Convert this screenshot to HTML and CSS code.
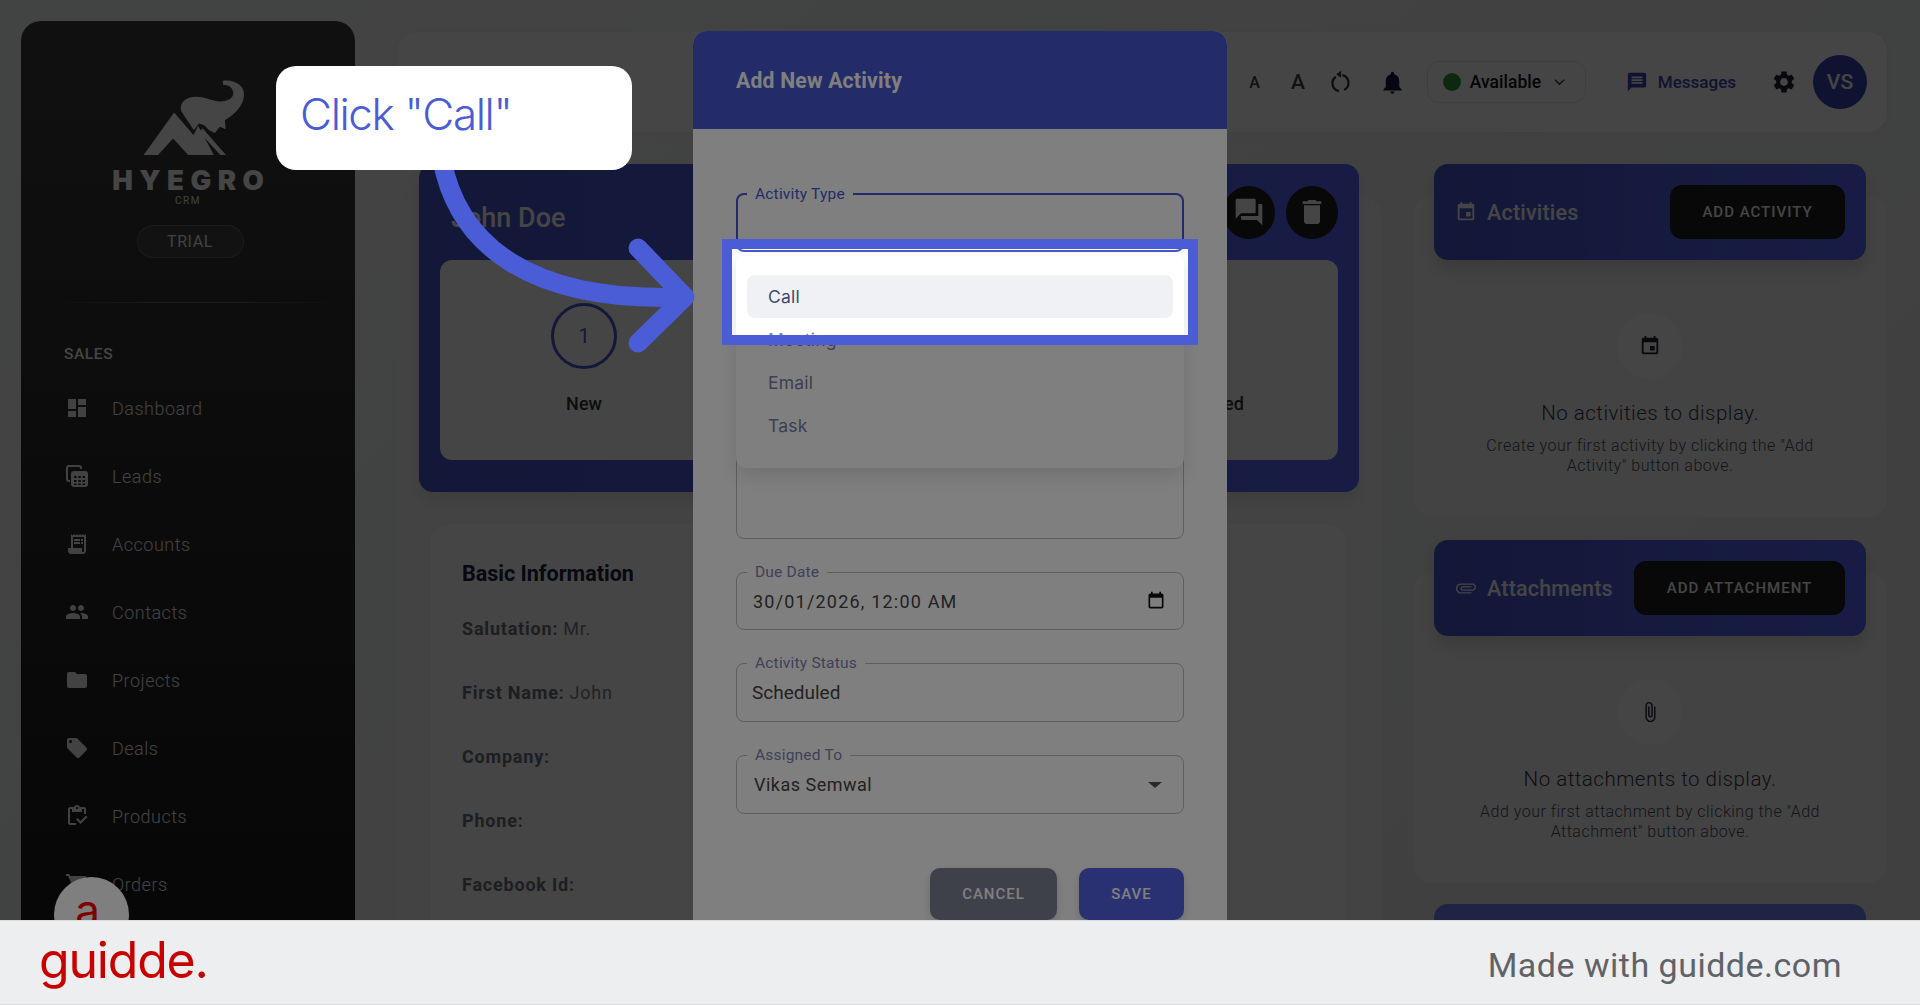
FILE: index.html
```html
<!DOCTYPE html>
<html lang="en">
<head>
<meta charset="utf-8">
<title>Add New Activity</title>
<link rel="stylesheet" href="styles.css">
</head>
<body>
<svg class="defs" width="0" height="0" aria-hidden="true">
  <symbol id="i-dashboard" viewBox="0 0 24 24"><path d="M3 13h8V3H3v10zm0 8h8v-6H3v6zm10 0h8V11h-8v10zm0-18v6h8V3h-8z"/></symbol>
  <symbol id="i-leads" viewBox="0 0 24 24"><path d="M4 1h10a3 3 0 0 1 3 3v1h-2V4a1 1 0 0 0-1-1H4a1 1 0 0 0-1 1v11a1 1 0 0 0 1 1h1v2H4a3 3 0 0 1-3-3V4a3 3 0 0 1 3-3z"/><path fill-rule="evenodd" d="M9 7h11a3 3 0 0 1 3 3v10a3 3 0 0 1-3 3H9a3 3 0 0 1-3-3V10a3 3 0 0 1 3-3zm0 5v2h2.500v-2H9zm4.300 0v2h2.500v-2h-2.500zm4.300 0v2h2.400v-2h-2.400zM9 16v2h2.500v-2H9zm4.300 0v2h2.500v-2h-2.500zm4.300 0v2h2.400v-2h-2.400zM9 19.500v1.500h2.500v-1.500H9zm4.300 0v1.500h2.500v-1.500h-2.500zm4.300 0v1.500h2.400v-1.500h-2.400z"/></symbol>
  <symbol id="i-receipt" viewBox="0 0 24 24"><path d="M19.500 3.500 18 2l-1.500 1.500L15 2l-1.500 1.500L12 2l-1.500 1.500L9 2 7.500 3.500 6 2v14H3v3c0 1.660 1.340 3 3 3h12c1.660 0 3-1.340 3-3V2l-1.500 1.500zM19 19c0 .55-.45 1-1 1s-1-.45-1-1v-3H8V5h11v14z"/><path d="M9 7h6v2H9zM16 7h2v2h-2zM9 10h6v2H9zM16 10h2v2h-2z"/></symbol>
  <symbol id="i-people" viewBox="0 0 24 24"><path d="M16 11c1.660 0 2.990-1.340 2.990-3S17.660 5 16 5c-1.660 0-3 1.340-3 3s1.340 3 3 3zm-8 0c1.660 0 2.990-1.340 2.990-3S9.660 5 8 5C6.340 5 5 6.340 5 8s1.340 3 3 3zm0 2c-2.330 0-7 1.170-7 3.500V19h14v-2.500c0-2.330-4.670-3.500-7-3.500zm8 0c-.29 0-.62.02-.97.05 1.160.84 1.970 1.970 1.970 3.450V19h6v-2.500c0-2.330-4.670-3.500-7-3.500z"/></symbol>
  <symbol id="i-folder" viewBox="0 0 24 24"><path d="M10 4H4c-1.100 0-1.990.9-1.990 2L2 18c0 1.100.9 2 2 2h16c1.100 0 2-.9 2-2V8c0-1.100-.9-2-2-2h-8l-2-2z"/></symbol>
  <symbol id="i-tag" viewBox="0 0 24 24"><path d="M21.410 11.580l-9-9C12.050 2.220 11.550 2 11 2H4c-1.100 0-2 .9-2 2v7c0 .55.22 1.050.59 1.420l9 9c.36.36.86.58 1.410.58.55 0 1.050-.22 1.410-.59l7-7c.37-.36.59-.86.59-1.410 0-.55-.23-1.060-.59-1.420zM5.500 7C4.670 7 4 6.330 4 5.500S4.670 4 5.500 4 7 4.670 7 5.500 6.330 7 5.500 7z"/></symbol>
  <symbol id="i-inventory" viewBox="0 0 24 24"><path d="M5 5h2v3h10V5h2v5h2V5c0-1.100-.9-2-2-2h-4.180C14.400 1.840 13.300 1 12 1s-2.400.84-2.820 2H5c-1.100 0-2 .9-2 2v14c0 1.100.9 2 2 2h6v-2H5V5zm7-2c.55 0 1 .45 1 1s-.45 1-1 1-1-.45-1-1 .45-1 1-1z"/><path d="M21 11.500 15.500 17l-3-3-1.500 1.500 4.500 4.500 7-7z"/></symbol>
  <symbol id="i-cart" viewBox="0 0 24 24"><path d="M7 18c-1.100 0-1.990.9-1.990 2S5.900 22 7 22s2-.9 2-2-.9-2-2-2zM1 2v2h2l3.600 7.590-1.350 2.450c-.16.28-.25.61-.25.96 0 1.100.9 2 2 2h12v-2H7.420c-.14 0-.25-.11-.25-.25l.03-.12.9-1.630h7.450c.75 0 1.410-.41 1.750-1.030l3.580-6.490c.08-.14.12-.31.12-.48 0-.55-.45-1-1-1H5.210l-.94-2H1zm16 16c-1.100 0-1.990.9-1.990 2s.89 2 1.990 2 2-.9 2-2-.9-2-2-2z"/></symbol>
  <symbol id="i-bell" viewBox="0 0 24 24"><path d="M12 22c1.100 0 2-.9 2-2h-4c0 1.100.89 2 2 2zm6-6v-5c0-3.070-1.640-5.640-4.500-6.320V4c0-.83-.67-1.500-1.500-1.500s-1.500.67-1.500 1.500v.68C7.630 5.360 6 7.920 6 11v5l-2 2v1h16v-1l-2-2z"/></symbol>
  <symbol id="i-reset" viewBox="0 0 24 24"><path d="M13 1.500v6.500l-4.500-3.200zM14.500 4.700a8.400 8.400 0 0 1 1.800 15.600l-1-1.800a6.300 6.300 0 0 0-1.400-11.800zM7.500 6.300l1.300 1.700a6.300 6.300 0 0 0 2.400 11.300l-.3 2.100A8.400 8.400 0 0 1 7.500 6.300z"/></symbol>
  <symbol id="i-message" viewBox="0 0 24 24"><path d="M20 2H4c-1.100 0-1.990.9-1.990 2L2 22l4-4h14c1.100 0 2-.9 2-2V4c0-1.100-.9-2-2-2zm-2 12H6v-2h12v2zm0-3H6V9h12v2zm0-3H6V6h12v2z"/></symbol>
  <symbol id="i-gear" viewBox="0 0 24 24"><path d="M19.140 12.940c.04-.3.06-.61.06-.94 0-.32-.02-.64-.07-.94l2.030-1.580c.18-.14.23-.41.12-.61l-1.920-3.320c-.12-.22-.37-.29-.59-.22l-2.390.96c-.5-.38-1.030-.7-1.620-.94l-.36-2.540c-.04-.24-.24-.41-.48-.41h-3.840c-.24 0-.43.17-.47.41l-.36 2.540c-.59.24-1.130.57-1.620.94l-2.390-.96c-.22-.08-.47 0-.59.22L2.740 8.870c-.12.21-.08.47.12.61l2.030 1.580c-.05.3-.09.63-.09.94s.02.64.07.94l-2.030 1.580c-.18.14-.23.41-.12.61l1.920 3.320c.12.22.37.29.59.22l2.390-.96c.5.38 1.030.7 1.620.94l.36 2.540c.05.24.24.41.48.41h3.840c.24 0 .44-.17.47-.41l.36-2.540c.59-.24 1.130-.56 1.620-.94l2.390.96c.22.08.47 0 .59-.22l1.920-3.320c.12-.22.07-.47-.12-.61l-2.010-1.580zM12 15.600c-1.980 0-3.600-1.620-3.600-3.600s1.620-3.600 3.600-3.600 3.600 1.620 3.600 3.600-1.620 3.600-3.600 3.600z"/></symbol>
  <symbol id="i-forum" viewBox="0 0 24 24"><path d="M21 6h-2v9H6v2c0 .55.45 1 1 1h11l4 4V7c0-.55-.45-1-1-1zm-4 6V3c0-.55-.45-1-1-1H3c-.55 0-1 .45-1 1v14l4-4h10c.55 0 1-.45 1-1z"/></symbol>
  <symbol id="i-delete" viewBox="0 0 24 24"><path d="M6 19c0 1.100.9 2 2 2h8c1.100 0 2-.9 2-2V7H6v12zM19 4h-3.500l-1-1h-5l-1 1H5v2h14V4z"/></symbol>
  <symbol id="i-event" viewBox="0 0 24 24"><path d="M17 12h-5v5h5v-5zM16 1v2H8V1H6v2H5c-1.110 0-1.990.9-1.990 2L3 19c0 1.100.89 2 2 2h14c1.100 0 2-.9 2-2V5c0-1.100-.9-2-2-2h-1V1h-2zm3 18H5V8h14v11z"/></symbol>
  <symbol id="i-clip" viewBox="0 0 24 24"><path d="M16.500 6v11.500c0 2.210-1.790 4-4 4s-4-1.790-4-4V5c0-1.380 1.120-2.500 2.500-2.500s2.500 1.120 2.500 2.500v10.500c0 .55-.45 1-1 1s-1-.45-1-1V6H10v9.500c0 1.380 1.120 2.500 2.500 2.500s2.500-1.120 2.500-2.500V5c0-2.210-1.790-4-4-4S7 2.790 7 5v12.500c0 3.040 2.460 5.500 5.500 5.500s5.500-2.460 5.500-5.500V6h-1.500z"/></symbol>
  <symbol id="i-cal" viewBox="0 0 24 24"><path d="M19 3h-1V1h-2v2H8V1H6v2H5a2 2 0 0 0-2 2v14a2 2 0 0 0 2 2h14a2 2 0 0 0 2-2V5a2 2 0 0 0-2-2zm0 16H5V8h14v11z"/></symbol>
</svg>

<div class="stage">
  <div class="app">
    <aside class="sidebar">
      <div class="brand">
        <svg class="logo" viewBox="120 25 305 230" aria-hidden="true">
          <path d="M122 252 213 125 271 192 285 165 332 252H255L210 203 165 252z"/>
          <path d="M235 122C226 100 245 80 275 78 300 75 330 92 350 92 375 92 392 80 390 65 388 50 375 42 360 43L358 30C395 25 425 45 422 75 420 105 395 130 365 148L367 175 350 168 335 186 318 178 303 163 287 158 272 178z"/>
          <path d="M298 172 368 252H351L289 184z"/>
        </svg>
        <div class="wordmark">HYEGRO</div>
        <div class="crm">CRM</div>
        <div class="trial">TRIAL</div>
      </div>
      <div class="side-rule"></div>
      <div class="side-head">SALES</div>
      <nav class="nav">
        <a class="nav-item"><svg class="nav-icon"><use href="#i-dashboard"/></svg>Dashboard</a>
        <a class="nav-item"><svg class="nav-icon"><use href="#i-leads"/></svg>Leads</a>
        <a class="nav-item"><svg class="nav-icon"><use href="#i-receipt"/></svg>Accounts</a>
        <a class="nav-item"><svg class="nav-icon"><use href="#i-people"/></svg>Contacts</a>
        <a class="nav-item"><svg class="nav-icon"><use href="#i-folder"/></svg>Projects</a>
        <a class="nav-item"><svg class="nav-icon"><use href="#i-tag"/></svg>Deals</a>
        <a class="nav-item"><svg class="nav-icon"><use href="#i-inventory"/></svg>Products</a>
        <a class="nav-item"><svg class="nav-icon"><use href="#i-cart"/></svg>Orders</a>
      </nav>
    </aside>

    <main class="main">
      <header class="topbar">
        <span class="font-a small">A</span>
        <span class="font-a big">A</span>
        <svg class="top-icon reset"><use href="#i-reset"/></svg>
        <svg class="top-icon bell"><use href="#i-bell"/></svg>
        <div class="status"><span class="dot"></span><span class="status-text">Available</span><svg class="chev" viewBox="0 0 12 8"><path d="M1 1.500l5 5 5-5"/></svg></div>
        <div class="messages"><svg class="msg-icon"><use href="#i-message"/></svg>Messages</div>
        <svg class="top-icon gear"><use href="#i-gear"/></svg>
        <div class="avatar">VS</div>
      </header>

      <div class="columns">
        <section class="lead-card">
          <div class="lead-head">
            <div class="lead-title-row">
              <h1 class="lead-name">John Doe</h1>
              <div class="round-btns">
                <span class="round-btn"><svg><use href="#i-forum"/></svg></span>
                <span class="round-btn"><svg><use href="#i-delete"/></svg></span>
              </div>
            </div>
            <div class="stages">
              <div class="step"><span class="step-num">1</span><span class="step-label">New</span></div>
              <div class="step step-end"><span class="step-label">Closed</span></div>
            </div>
          </div>
          <div class="info-card">
            <h2 class="info-title">Basic Information</h2>
            <p class="info-row"><b>Salutation:</b> Mr.</p>
            <p class="info-row"><b>First Name:</b> John</p>
            <p class="info-row"><b>Company:</b></p>
            <p class="info-row"><b>Phone:</b></p>
            <p class="info-row"><b>Facebook Id:</b></p>
          </div>
        </section>

        <div class="col-right">
          <section class="panel">
            <div class="panel-head">
              <svg class="panel-icon"><use href="#i-event"/></svg>
              <span class="panel-title">Activities</span>
              <span class="panel-btn btn-activity">ADD ACTIVITY</span>
            </div>
            <div class="empty">
              <span class="empty-icon"><svg><use href="#i-event"/></svg></span>
              <p class="empty-title">No activities to display.</p>
              <p class="empty-sub">Create your first activity by clicking the "Add<br>Activity" button above.</p>
            </div>
          </section>
          <section class="panel">
            <div class="panel-head">
              <svg class="panel-icon clip-flat"><use href="#i-clip"/></svg>
              <span class="panel-title">Attachments</span>
              <span class="panel-btn btn-attach">ADD ATTACHMENT</span>
            </div>
            <div class="empty empty-tight">
              <span class="empty-icon"><svg><use href="#i-clip"/></svg></span>
              <p class="empty-title">No attachments to display.</p>
              <p class="empty-sub">Add your first attachment by clicking the "Add<br>Attachment" button above.</p>
            </div>
          </section>
          <section class="panel-next"></section>
        </div>
      </div>
    </main>
  </div>

  <div class="backdrop"></div>

  <div class="widget"><span>a.</span></div>

  <div class="modal">
    <div class="modal-head">Add New Activity</div>
    <div class="modal-body">
      <div class="field field-focus"><span class="field-label">Activity Type</span></div>
      <div class="field field-desc"></div>
      <div class="field field-date"><span class="field-label">Due Date</span><span class="field-value date">30/01/2026, 12:00 AM</span><svg class="field-icon"><use href="#i-cal"/></svg></div>
      <div class="field"><span class="field-label">Activity Status</span><span class="field-value status-value">Scheduled</span></div>
      <div class="field"><span class="field-label">Assigned To</span><span class="field-value assigned">Vikas Semwal</span><span class="caret"></span></div>
      <div class="modal-actions">
        <span class="act act-cancel">CANCEL</span>
        <span class="act act-save">SAVE</span>
      </div>
    </div>
    <ul class="menu">
      <li class="menu-item active">Call</li>
      <li class="menu-item">Meeting</li>
      <li class="menu-item">Email</li>
      <li class="menu-item">Task</li>
    </ul>
  </div>

  <div class="spot"></div>

  <svg class="arrow" viewBox="0 0 1920 920" aria-hidden="true">
    <path d="M442 160C458 245 530 303 684 297"/>
    <path d="M638 248 685 297 638 343"/>
  </svg>

  <div class="callout">Click "Call"</div>
</div>

<footer class="footer">
  <span class="guidde">guidde.</span>
  <span class="made">Made with guidde.com</span>
</footer>
</body>
</html>
```
FILE: styles.css
```css
* { box-sizing: border-box; }
html, body { margin: 0; height: 100%; }
body {
  width: 1920px;
  height: 1005px;
  overflow: hidden;
  display: flex;
  flex-direction: column;
  font-family: Roboto, "Liberation Sans", sans-serif;
  background: #f4f7f6;
}
.defs { position: absolute; }
svg { fill: currentColor; }

.stage { position: relative; height: 920px; overflow: hidden; flex: none; }
.app { display: flex; height: 1300px; padding: 21px 33px 0 21px; gap: 42px; background: linear-gradient(135deg, #f6faf8, #ebebeb); }

/* Sidebar */
.sidebar {
  width: 334px;
  flex: none;
  height: 1200px;
  border-radius: 20px 20px 0 0;
  background: linear-gradient(180deg, #3e3e3e 0, #1a1a1a 900px);
  color: #fff;
  display: flex;
  flex-direction: column;
}
.brand { display: flex; flex-direction: column; align-items: center; padding-top: 58px; }
.logo { width: 102px; height: 77px; margin-left: 12px; fill: #fff; flex: none; }
.wordmark { margin-top: 12px; font-family: Inter, Roboto, sans-serif; font-weight: 900; font-size: 27.500px; line-height: 24px; letter-spacing: 6.500px; margin-right: -6.500px; }
.crm { margin-top: 3px; font-size: 10px; line-height: 12px; letter-spacing: 1.500px; color: #eee; }
.trial {
  margin-top: 18px; width: 107px; height: 33px; margin-left: 4px;
  border-radius: 17px; border: 1px solid rgba(255,255,255,.18); background: rgba(255,255,255,.07);
  display: flex; align-items: center; justify-content: center;
  font-size: 16px; color: #f0f0f0; letter-spacing: .6px;
}
.side-rule { margin: 44px 12px 0 24px; height: 1px; flex: none; background: linear-gradient(90deg, transparent, rgba(255,255,255,.25) 40%, rgba(255,255,255,.2) 70%, transparent); }
.side-head { margin: 43px 0 0 43px; font-size: 15.500px; line-height: 16px; font-weight: 500; letter-spacing: .6px; color: #fff; }
.nav { display: flex; flex-direction: column; margin-top: 12px; }
.nav-item { height: 68px; flex: none; display: flex; align-items: center; padding-left: 44px; gap: 23px; font-size: 18px; font-weight: 300; letter-spacing: .5px; color: #f4f4f4; }
.nav-icon { width: 24px; height: 24px; flex: none; }

/* Main */
.main { flex: 1; display: flex; flex-direction: column; min-width: 0; }
.topbar {
  flex: none;
  margin-top: 11px; height: 100px; padding-right: 20px;
  background: #fff; border-radius: 20px;
  display: flex; align-items: center; justify-content: flex-end;
  box-shadow: 0 2px 10px rgba(0,0,0,.03);
}
.font-a { font-weight: 500; color: #3c4047; }
.font-a.small { font-size: 16px; margin-right: 31px; }
.font-a.big { font-size: 21px; margin-right: 22px; }
.top-icon { width: 24px; height: 24px; color: #262c3d; flex: none; }
.reset { width: 26px; height: 26px; margin-right: 26px; color: #2f3440; }
.bell { width: 27px; height: 27px; margin-right: 21px; color: #10183c; }
.status { width: 159px; height: 42px; border: 1px solid rgba(0,0,0,.1); border-radius: 12px; display: flex; align-items: center; padding-left: 15px; margin-right: 40px; }
.dot { width: 18px; height: 18px; border-radius: 50%; background: #2e9a32; flex: none; }
.status-text { margin-left: 9px; font-size: 17.500px; font-weight: 500; color: #111; }
.chev { width: 11px; height: 8px; margin-left: 13px; fill: none; stroke: #333; stroke-width: 1.500; }
.messages { display: flex; align-items: center; gap: 10px; font-size: 17px; font-weight: 500; color: #3949b6; margin-right: 35px; }
.msg-icon { width: 22px; height: 22px; }
.gear { width: 26px; height: 26px; margin-right: 16px; color: #1d2233; }
.avatar { width: 54px; height: 54px; border-radius: 50%; background: #3949b6; color: #fff; display: flex; align-items: center; justify-content: center; font-size: 21px; font-weight: 500; }

.columns { flex: none; display: grid; grid-template-columns: 984px 474px; gap: 32px; align-items: start; margin-top: 64px; }
.lead-card { background: #f8f8f8; border-radius: 20px 20px 0 0; height: 1000px; }
.lead-head {
  margin: -32px 22px 0; height: 328px; border-radius: 14px;
  background: linear-gradient(90deg, #4658d0, #5a6aff); padding: 0 21px 32px; display: flex; flex-direction: column;
  box-shadow: 0 8px 16px rgba(0,0,0,.08);
}
.lead-title-row { flex: none; height: 96px; display: flex; align-items: center; justify-content: space-between; padding-left: 11px; }
.lead-name { margin: 12px 0 0; font-size: 27px; font-weight: 500; color: #fff; }
.round-btns { display: flex; gap: 11px; }
.round-btn { width: 52px; height: 53px; border-radius: 50%; background: #1e1e1e; color: #fff; display: flex; align-items: center; justify-content: center; }
.round-btn svg { width: 32px; height: 32px; }
.stages { flex: 1; background: #fff; border-radius: 12px; display: flex; justify-content: space-between; padding-right: 92px; }
.step { width: 288px; display: flex; flex-direction: column; align-items: center; padding-top: 43px; }
.step-end { padding-top: 133px; width: 60px; }
.step-num { width: 66px; height: 66px; border-radius: 50%; border: 3px solid #4659cf; color: #4659cf; display: flex; align-items: center; justify-content: center; font-size: 20px; }
.step-label { margin-top: 24px; font-size: 18px; font-weight: 500; color: #333; }
.step-end .step-label { margin-top: 0; }

.info-card { margin: 31px 0 0 32px; width: 919px; background: #fff; border-radius: 20px 20px 0 0; padding: 35px 32px; height: 500px; border: 1px solid rgba(0,0,0,.04); }
.info-title { margin: 0; font-size: 21.500px; line-height: 30px; font-weight: 700; color: #1b2040; }
.info-row { margin: 0; height: 64px; font-size: 18px; line-height: 20px; color: #7a7f90; display: flex; align-items: center; gap: 5px; letter-spacing: .8px; }
.info-title + .info-row { margin-top: 8px; }
.info-row b { font-weight: 700; color: #6d7080; }

.col-right { display: flex; flex-direction: column; gap: 55px; }
.panel { background: #f8f8f8; border-radius: 20px; height: 321px; }
.panel + .panel { height: 311px; }
.panel-head {
  margin: -32px 21px 0; height: 96px; border-radius: 14px; background: linear-gradient(90deg, #4658d0, #5a6aff); padding: 0 21px;
  display: flex; align-items: center; color: #fff; box-shadow: 0 10px 16px rgba(0,0,0,.12);
}
.panel-icon { width: 22px; height: 22px; flex: none; }
.clip-flat { transform: rotate(90deg); }
.panel-title { margin-left: 10px; font-size: 21.500px; font-weight: 500; flex: 1; letter-spacing: .2px; }
.panel-btn { height: 54px; border-radius: 12px; background: #1e1e1e; color: #fff; display: flex; align-items: center; justify-content: center; font-size: 15px; font-weight: 500; letter-spacing: 1px; }
.btn-activity { width: 175px; }
.btn-attach { width: 211px; }
.panel-next { margin: -34px 21px 0; height: 96px; border-radius: 14px; background: #7481ff; }

.empty { display: flex; flex-direction: column; align-items: center; padding-top: 53px; text-align: center; }
.empty-tight { padding-top: 43px; }
.empty-icon { width: 66px; height: 66px; border-radius: 50%; background: #fff; display: flex; align-items: center; justify-content: center; color: #1e2233; }
.empty-icon svg { width: 22px; height: 22px; }
.empty-title { margin: 20px 0 0; font-size: 20.500px; line-height: 28px; font-weight: 300; letter-spacing: .5px; color: #343a4f; }
.empty-sub { margin: 9px 0 0; font-size: 16px; line-height: 20px; font-weight: 300; letter-spacing: .5px; color: #4a5060; }

.backdrop { position: absolute; inset: 0; background: rgba(0,0,0,.46); }

.widget { position: absolute; left: 54px; top: 877px; width: 75px; height: 75px; border-radius: 50%; background: #fff; display: flex; justify-content: center; padding: 8px 0 0 5px; color: #ff0000; font-size: 44px; line-height: 50px; font-family: Inter, sans-serif; }

/* Modal */
.modal { position: absolute; left: 693px; top: 31px; width: 534px; height: 900px; background: #fff; border-radius: 14px 14px 0 0; }
.modal-head { height: 98px; background: #4658d0; border-radius: 14px 14px 0 0; padding-left: 43px; display: flex; align-items: center; color: #fff; font-size: 21.200px; font-weight: 700; letter-spacing: .2px; }
.modal-body { padding: 64px 43px 0; display: flex; flex-direction: column; gap: 33px; }
.field { position: relative; height: 59px; flex: none; border: 1.500px solid #bcbcbc; border-radius: 8px; display: flex; align-items: center; padding: 0 14px; }
.field-focus { border: 2.500px solid #4658d0; }
.field-desc { height: 254px; }
.field-date { height: 58px; }
.field-label { position: absolute; left: 10px; top: -10px; padding: 0 8px; background: #fff; font-size: 15.500px; line-height: 18px; color: #7c82b0; letter-spacing: .2px; }
.field-focus .field-label { left: 9px; color: #4658d0; }
.field-value { font-size: 18px; color: #444; letter-spacing: .5px; }
.date { letter-spacing: 1.200px; margin-left: 2px; }
.status-value { letter-spacing: 0; font-size: 19px; margin-left: 1px; }
.assigned { margin-left: 3px; }
.field-icon { position: absolute; right: 17px; top: 18px; width: 20px; height: 20px; color: #111; }
.caret { position: absolute; right: 21px; top: 26px; border-style: solid; border-width: 6px 7px 0; border-color: #555 transparent transparent; }
.modal-actions { display: flex; justify-content: flex-end; gap: 22px; margin-top: 21px; }
.act { height: 52px; border-radius: 10px; color: #fff; display: flex; align-items: center; justify-content: center; font-size: 15px; font-weight: 500; letter-spacing: 1px; box-shadow: 0 4px 10px rgba(0,0,0,.15); }
.act-cancel { width: 127px; background: #7c8094; }
.act-save { width: 105px; background: #5462e4; }

.menu { position: absolute; left: 43px; top: 222px; width: 448px; height: 215px; margin: 0; padding: 22px 11px 0; list-style: none; background: #fff; border-radius: 10px; box-shadow: 0 8px 20px rgba(0,0,0,.12); }
.menu-item { height: 43px; border-radius: 8px; padding-left: 21px; display: flex; align-items: center; font-family: Inter, Roboto, sans-serif; font-size: 17.500px; letter-spacing: .2px; color: #7a80a0; }
.menu-item.active { background: #f0f1f5; color: #3d4a6d; }

/* Guide overlay */
.spot { position: absolute; left: 722px; top: 239px; width: 476px; height: 106px; border: 10px solid #4a5cd6; box-shadow: 0 0 0 2400px rgba(0,0,0,.5); }
.arrow { position: absolute; inset: 0; width: 1920px; height: 920px; fill: none; stroke: #4a5cd6; stroke-width: 19; stroke-linecap: round; stroke-linejoin: round; }
.callout { position: absolute; left: 276px; top: 66px; width: 356px; height: 104px; padding: 23px 0 0 24px; background: #fff; border-radius: 20px; font-family: Inter, Roboto, sans-serif; font-size: 44px; font-weight: 300; line-height: 50px; color: #4a5cd6; letter-spacing: -1.400px; }

/* Footer */
.footer { height: 85px; flex: none; background: #edeef0; border-top: 1px solid #dcdde0; border-bottom: 1px solid #dcdde0; display: flex; align-items: center; justify-content: space-between; padding: 0 78px 0 39px; }
.guidde { font-family: Inter, sans-serif; font-size: 50px; line-height: 50px; color: #c80000; letter-spacing: -1.200px; margin-top: -6px; }
.made { font-size: 34px; color: #5f6368; letter-spacing: .5px; margin-top: 4px; }
```
